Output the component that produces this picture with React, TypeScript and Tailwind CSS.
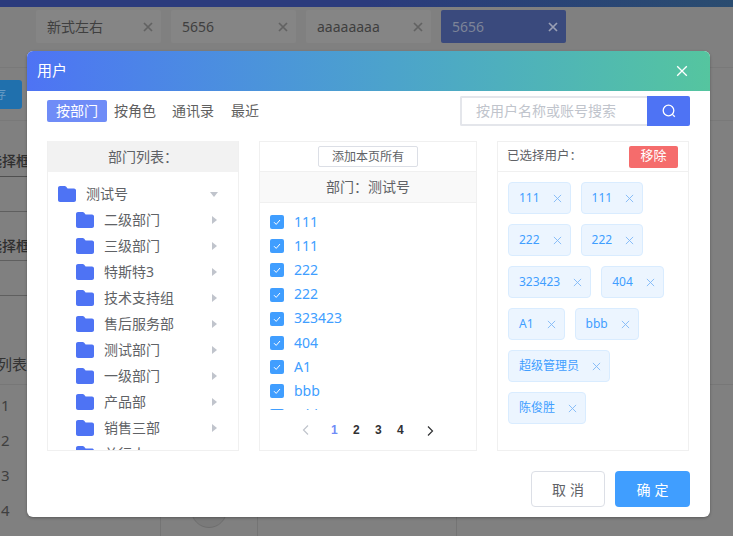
import React from "react"

const departments = ["二级部门", "三级部门", "特斯特3", "技术支持组", "售后服务部", "测试部门", "一级部门", "产品部", "销售三部", "单行人"]
const users = ["111", "111", "222", "222", "323423", "404", "A1", "bbb", "cdd"]
const selected = ["111", "111", "222", "222", "323423", "404", "A1", "bbb", "超级管理员", "陈俊胜"]
const bgTabs = ["新式左右", "5656", "aaaaaaaa"]

const Folder = () => (
  <svg className="w-[18px] h-[16px] shrink-0" viewBox="0 0 18 16">
    <path
      fill="#4e73f4"
      d="M2 0h4.6c.6 0 1 .2 1.4.6L9.6 2.4H16c1.1 0 2 .9 2 2V14c0 1.1-.9 2-2 2H2c-1.1 0-2-.9-2-2V2C0 .9.9 0 2 0z"
    />
  </svg>
)

const Caret = ({ down }: { down?: boolean }) => (
  <svg className="w-[8px] h-[10px] shrink-0" viewBox="0 0 8 10">
    <path fill="#c0c4cc" d={down ? "M0 3h8L4 8z" : "M2 1l5 4-5 4z"} />
  </svg>
)

const Check = () => (
  <span className="w-[14px] h-[14px] rounded-[2px] bg-[#409eff] flex items-center justify-center shrink-0">
    <svg className="w-[10px] h-[10px]" viewBox="0 0 10 10" fill="none" stroke="#fff" strokeWidth="1">
      <path d="M2 5.2l2.2 2.2L8 3" />
    </svg>
  </span>
)

const Cross = ({ size = 10, color = "#7fb8f7", weight = 1 }: { size?: number; color?: string; weight?: number }) => (
  <svg width={size} height={size} viewBox="0 0 10 10" fill="none" stroke={color} strokeWidth={weight}>
    <path d="M1 1l8 8M9 1l-8 8" />
  </svg>
)

export default function App() {
  return (
    <div className="relative w-[733px] h-[536px] overflow-hidden bg-[#808080] font-['Noto_Sans','Noto_Sans_CJK_SC',sans-serif] text-[14px] text-[#606266]">
      {/* page behind the dialog */}
      <div className="h-[7px] bg-gradient-to-r from-[#2a3a7c] via-[#2a3a7c] to-[#2a4c70]" />
      <div className="flex gap-[10px] pl-[36px] pt-[3px]">
        {bgTabs.map((t) => (
          <div key={t} className="w-[125px] h-[33px] rounded-[2px] bg-[#858585] pl-[11px] pr-[8px] flex items-center justify-between text-[#3f3f3f]">
            <span className="mb-[1px]">{t}</span>
            <Cross size={10} color="#626262" weight={1.7} />
          </div>
        ))}
        <div className="w-[125px] h-[33px] rounded-[2px] bg-[#3a4a7d] pl-[11px] pr-[8px] flex items-center justify-between text-[#7d8498]">
          <span className="mb-[1px]">5656</span>
          <Cross size={10} color="#9aa0b5" weight={1.7} />
        </div>
      </div>
      <div className="mt-[24px] h-[1px] bg-[#797979]" />
      <div className="mt-[12px] w-[22px] h-[29px] rounded-r-[3px] bg-[#2070ad] text-[#6a9cc4] text-[12px] flex items-center justify-end pr-[16px] overflow-hidden">
        <span className="shrink-0">存</span>
      </div>
      <div className="mt-[11px] h-[1px] bg-[#797979]" />
      <div className="mt-[29px] h-[21px] w-[30px] overflow-hidden whitespace-nowrap text-[#2f2f2f] font-medium flex justify-end">
        <span className="shrink-0">选择框</span>
      </div>
      <div className="mt-[5px] h-[1px] w-[27px] bg-[#4f4f4f]" />
      <div className="mt-[34px] h-[1px] w-[27px] bg-[#5f5f5f]" />
      <div className="mt-[23px] h-[21px] w-[30px] overflow-hidden whitespace-nowrap text-[#2f2f2f] font-medium flex justify-end">
        <span className="shrink-0">选择框</span>
      </div>
      <div className="mt-[4px] h-[1px] w-[27px] bg-[#5f5f5f]" />
      <div className="mt-[34px] h-[1px] w-[27px] bg-[#5f5f5f]" />
      <div className="mt-[58px] w-[30px] -ml-[3px] whitespace-nowrap text-[15px] text-[#333] leading-[20px]">列表</div>
      <div className="mt-[10px] h-[1px] bg-[#777]" />
      <div className="pl-[1px] pt-[3px] text-[15px] text-[#3f3f3f]">
        {[1, 2, 3, 4].map((n) => (
          <div key={n} className="h-[35px] flex items-center">{n}</div>
        ))}
      </div>
      <div className="absolute left-[160px] bottom-0 h-[30px] w-[297px] border-l border-r border-[#747474] flex">
        <div className="w-[97px] border-r border-[#747474] flex justify-center">
          <div className="w-[36px] h-[36px] -mt-[14px] rounded-full border border-[#6e6e6e] bg-[#7a7a7a]" />
        </div>
      </div>

      {/* dialog */}
      <div className="absolute left-[27px] top-[51px] w-[683px] h-[466px] bg-white rounded-[6px] overflow-hidden flex flex-col shadow-[0_1px_3px_rgba(0,0,0,0.3)]">
        <div className="h-[40px] shrink-0 bg-gradient-to-r from-[#4e73f4] to-[#55c59f] flex items-center justify-between pl-[10px] pr-[22px] text-white">
          <span className="text-[15px] mb-[1px]">用户</span>
          <Cross size={12} color="#ffffff" weight={1.1} />
        </div>

        <div className="h-[50px] shrink-0 pl-[20px] pr-[20px] pt-[5px] flex items-start justify-between">
          <div className="flex items-center mt-[4px] h-[22px] text-[#5f5f5f]">
            <span className="w-[60px] h-[22px] rounded-[2px] bg-[#6f8cf7] text-white flex items-center justify-center pb-[2px]">按部门</span>
            <span className="ml-[7px] mb-[2px]">按角色</span>
            <span className="ml-[16px] mb-[2px]">通讯录</span>
            <span className="ml-[17px] mb-[2px]">最近</span>
          </div>
          <div className="flex h-[30px]">
            <div className="w-[187px] border-2 border-r-0 border-[#e4e6eb] rounded-l-[2px] pl-[14px] pb-[2px] flex items-center text-[#c0c4cc]">按用户名称或账号搜索</div>
            <div className="w-[43px] bg-[#4e73f4] rounded-r-[2px] flex items-center justify-center">
              <svg className="w-[14px] h-[14px]" viewBox="0 0 14 14" fill="none" stroke="#fff" strokeWidth="1.3">
                <circle cx="6.5" cy="6.5" r="5.3" />
                <path d="M10.4 10.4l2.4 2.4" />
              </svg>
            </div>
          </div>
        </div>

        <div className="flex gap-[20px] pl-[20px] h-[310px] shrink-0">
          {/* departments */}
          <div className="w-[192px] border border-[#f0f0f0] border-t-0 flex flex-col overflow-hidden">
            <div className="h-[31px] -mx-[1px] shrink-0 bg-[#f2f2f2] flex items-center justify-center pb-[1px]">部门列表：</div>
            <div className="pt-[9px] pl-[10px] pr-[20px] overflow-hidden">
              <div className="h-[26px] flex items-center">
                <Folder />
                <span className="ml-[10px] flex-1 mb-[2px]">测试号</span>
                <Caret down />
              </div>
              {departments.map((d) => (
                <div key={d} className="h-[26px] pl-[18px] flex items-center">
                  <Folder />
                  <span className="ml-[10px] flex-1 mb-[2px]">{d}</span>
                  <Caret />
                </div>
              ))}
            </div>
          </div>

          {/* users */}
          <div className="w-[218px] border border-[#f0f0f0] flex flex-col overflow-hidden">
            <div className="h-[30px] shrink-0 flex items-center justify-center border-b border-[#f0f0f0]">
              <span className="w-[100px] h-[21px] border border-[#dcdfe6] rounded-[2px] flex items-center justify-center text-[12px]">添加本页所有</span>
            </div>
            <div className="h-[31px] shrink-0 bg-[#f9f9f9] border-b border-[#f0f0f0] flex items-center justify-center pb-[1px]">
              <span>部门：测</span>
              <span>试号</span>
            </div>
            <div className="h-[207px] shrink-0 overflow-hidden pt-[7px] pl-[10px]">
              {users.map((u, i) => (
                <div key={i} className="h-[24.2px] flex items-center text-[#409eff]">
                  <Check />
                  <span className="ml-[10px] mb-[2px]">{u}</span>
                </div>
              ))}
            </div>
            <div className="flex-1 flex items-center pl-[41px] font-['Liberation_Sans',sans-serif] text-[12px] font-bold text-[#303133]">
              <svg className="w-[10px] h-[12px]" viewBox="0 0 10 12" fill="none" stroke="#c0c4cc" strokeWidth="1.2">
                <path d="M7 1.5L2.5 6 7 10.5" />
              </svg>
              <span className="ml-[20px] w-[22px] text-[#6f8cf7]">1</span>
              <span className="w-[22px]">2</span>
              <span className="w-[22px]">3</span>
              <span className="w-[22px]">4</span>
              <svg className="ml-[6px] w-[10px] h-[12px] mt-[2px]" viewBox="0 0 10 12" fill="none" stroke="#303133" strokeWidth="1.2">
                <path d="M3 1.5L7.5 6 3 10.5" />
              </svg>
            </div>
          </div>

          {/* selected */}
          <div className="w-[192px] border border-[#f0f0f0] flex flex-col">
            <div className="h-[30px] shrink-0 border-b border-[#f0f0f0] flex items-center justify-between pl-[9px] pr-[10px] text-[12.5px]">
              已选择用户：
              <span className="w-[49px] h-[22px] rounded-[2px] bg-[#f56c6c] text-white flex items-center justify-center text-[13px] pb-[1px]">移除</span>
            </div>
            <div className="flex flex-wrap gap-[10px] pt-[10px] pl-[10px] content-start">
              {selected.map((s, i) => (
                <span key={i} className="h-[32px] pl-[10px] pr-[8px] rounded-[4px] bg-[#ecf5ff] border border-[#d9ecff] text-[#409eff] text-[12px] flex items-center gap-[13px]">
                  {s}
                  <Cross size={9} />
                </span>
              ))}
            </div>
          </div>
        </div>

        <div className="flex justify-end gap-[10px] pr-[20px] pt-[20px]">
          <button className="w-[74px] h-[36px] pl-[4px] rounded-[4px] border border-[#dcdfe6] bg-white text-[#606266] tracking-[4px]">取消</button>
          <button className="w-[75px] h-[36px] pl-[4px] rounded-[4px] bg-[#409eff] text-white tracking-[4px]">确定</button>
        </div>
      </div>
    </div>
  )
}
